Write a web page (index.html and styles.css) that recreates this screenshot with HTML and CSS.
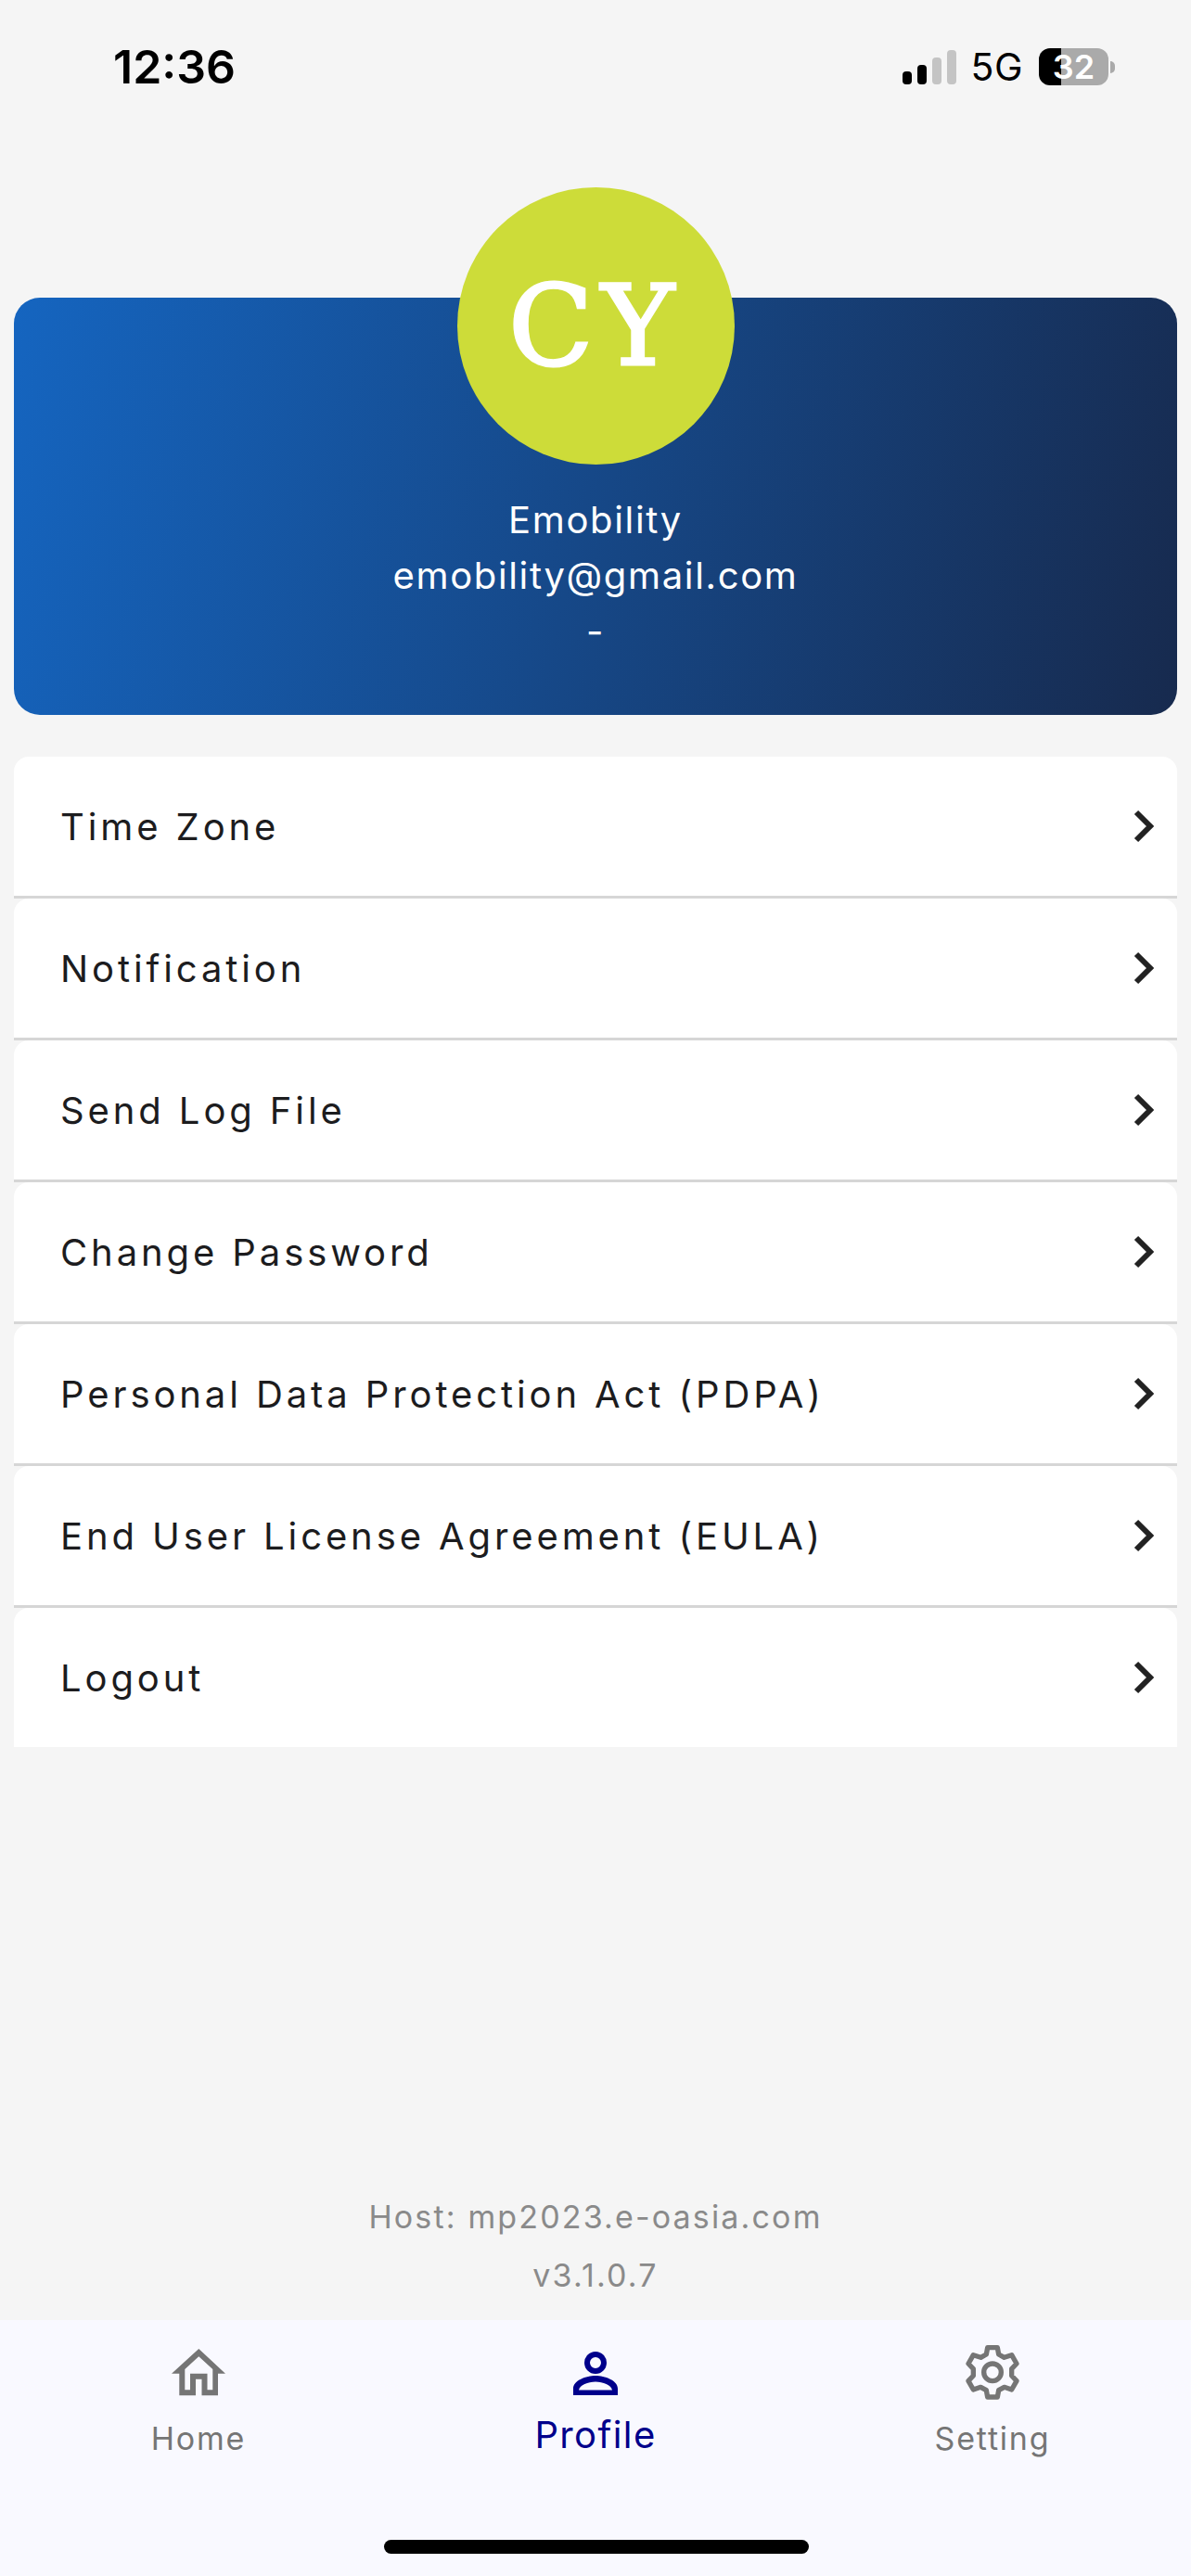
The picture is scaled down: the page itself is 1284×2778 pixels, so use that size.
FILE: index.html
```html
<!DOCTYPE html>
<html>
<head>
    <title>Profile</title>
    <link rel="stylesheet" href="styles.css">
</head>
<body>
    <div class="screen">
        <div class="status-bar">
            <div class="clock">12:36</div>
            <div class="status-right">
                <div class="signal">
                    <span class="bar bar-1"></span>
                    <span class="bar bar-2"></span>
                    <span class="bar bar-3"></span>
                    <span class="bar bar-4"></span>
                </div>
                <div class="network">5G</div>
                <div class="battery">
                    <div class="battery-body">32</div>
                    <div class="battery-tip"></div>
                </div>
            </div>
        </div>

        <div class="profile-card">
            <div class="avatar">CY</div>
            <div class="profile-name">Emobility</div>
            <div class="profile-line">emobility@gmail.com</div>
            <div class="profile-line">-</div>
        </div>

        <div class="menu">
            <div class="menu-row"><span>Time Zone</span><svg class="chevron" viewBox="0 0 22 36"><path d="M3 3l15 15L3 33"/></svg></div>
            <div class="menu-row"><span>Notification</span><svg class="chevron" viewBox="0 0 22 36"><path d="M3 3l15 15L3 33"/></svg></div>
            <div class="menu-row"><span>Send Log File</span><svg class="chevron" viewBox="0 0 22 36"><path d="M3 3l15 15L3 33"/></svg></div>
            <div class="menu-row"><span>Change Password</span><svg class="chevron" viewBox="0 0 22 36"><path d="M3 3l15 15L3 33"/></svg></div>
            <div class="menu-row"><span>Personal Data Protection Act (PDPA)</span><svg class="chevron" viewBox="0 0 22 36"><path d="M3 3l15 15L3 33"/></svg></div>
            <div class="menu-row"><span>End User License Agreement (EULA)</span><svg class="chevron" viewBox="0 0 22 36"><path d="M3 3l15 15L3 33"/></svg></div>
            <div class="menu-row"><span>Logout</span><svg class="chevron" viewBox="0 0 22 36"><path d="M3 3l15 15L3 33"/></svg></div>
        </div>

        <div class="app-info">
            <div>Host: mp2023.e-oasia.com</div>
            <div>v3.1.0.7</div>
        </div>

        <div class="tab-bar">
            <div class="tab">
                <div class="tab-icon">
                    <svg class="icon-home" viewBox="0 0 58 51"><path fill-rule="evenodd" d="M29.3 0L58 26.7H50V50.3H32.5V32.7H26V50.3H8.3V26.7H0ZM29.3 8.3L14.3 22V44.3H20V26.7H38.5V44.3H44.3V22Z"/></svg>
                </div>
                <div class="tab-label">Home</div>
            </div>
            <div class="tab tab-active">
                <div class="tab-icon">
                    <svg class="icon-profile" viewBox="0 0 48 47"><circle cx="24" cy="12" r="9"/><path d="M0 47V40C0 31 14 26 24 26C34 26 48 31 48 40V47ZM6 41.5H42C41 36 32 32.5 24 32.5C16 32.5 7 36 6 41.5Z"/></svg>
                </div>
                <div class="tab-label">Profile</div>
            </div>
            <div class="tab">
                <div class="tab-icon">
                    <svg class="icon-gear" viewBox="153 88 174 177"><path d="M224 96H256L260 118L278 128L302 120L318 148L302 165V187L318 204L302 232L278 224L260 234L256 256H224L220 234L202 224L178 232L162 204L178 187V165L162 148L178 120L202 128L220 118Z"/><circle cx="240" cy="176" r="28"/></svg>
                </div>
                <div class="tab-label">Setting</div>
            </div>
            <div class="home-indicator"></div>
        </div>
    </div>
</body>
</html>
```

FILE: styles.css
```css
* {
    box-sizing: border-box;
}
body {
    margin: 0;
    background-color: #f5f5f5;
    font-family: Inter, "Noto Sans", sans-serif;
}
.screen {
    display: flex;
    flex-direction: column;
    width: 1284px;
    height: 2778px;
}

/* status bar */
.status-bar {
    display: flex;
    justify-content: space-between;
    align-items: center;
    height: 144px;
    padding: 0 82px 0 122px;
    flex-shrink: 0;
}
.clock {
    font-size: 50px;
    font-weight: 600;
    color: #000;
}
.status-right {
    display: flex;
    align-items: center;
}
.signal {
    display: flex;
    align-items: flex-end;
    gap: 6px;
    height: 37px;
    margin-right: 15px;
}
.bar {
    width: 10px;
    border-radius: 4px;
    background-color: #c4c4c4;
}
.bar-1 { height: 14px; background-color: #000; }
.bar-2 { height: 21px; background-color: #000; }
.bar-3 { height: 29px; }
.bar-4 { height: 37px; }
.network {
    font-size: 41px;
    letter-spacing: 0.5px;
    color: #000;
    margin-right: 17px;
}
.battery {
    display: flex;
    align-items: center;
}
.battery-body {
    width: 75px;
    height: 40px;
    border-radius: 12px;
    background: linear-gradient(90deg, #000 32%, #aaa 32%);
    color: #fff;
    font-size: 36px;
    font-weight: 600;
    line-height: 40px;
    text-align: center;
}
.battery-tip {
    width: 5px;
    height: 13px;
    margin-left: 2px;
    border-radius: 0 7px 7px 0;
    background-color: #aaa;
}

/* profile card */
.profile-card {
    display: flex;
    flex-direction: column;
    align-items: center;
    height: 450px;
    margin: 177px 15px 0;
    border-radius: 28px;
    background: linear-gradient(103deg, #1565c0 0%, #172a4e 100%);
    color: #fff;
    flex-shrink: 0;
}
.avatar {
    display: flex;
    justify-content: center;
    align-items: center;
    width: 299px;
    height: 299px;
    margin-top: -119px;
    margin-bottom: 30px;
    border-radius: 50%;
    background-color: #cddc39;
    font-family: "DejaVu Serif", serif;
    font-size: 119px;
    letter-spacing: 9px;
    -webkit-text-stroke: 3px #fff;
}
.profile-name, .profile-line {
    font-size: 40px;
    font-weight: 380;
    line-height: 60px;
    letter-spacing: 1.65px;
}

/* menu */
.menu {
    margin: 45px 15px 0;
    flex-shrink: 0;
}
.menu-row {
    display: flex;
    justify-content: space-between;
    align-items: center;
    height: 153px;
    padding: 0 25px 0 50px;
    border-bottom: 3px solid #d6d6d6;
    border-radius: 16px 16px 0 0;
    background-color: #fff;
    color: #1c1c1e;
    font-size: 40px;
    font-weight: 380;
    letter-spacing: 3.9px;
}
.menu-row:last-child {
    height: 150px;
    border-bottom: none;
}
.chevron {
    width: 22px;
    height: 36px;
    fill: none;
    stroke: #222;
    stroke-width: 6;
}

/* host and version */
.app-info {
    margin-top: auto;
    padding-bottom: 17px;
    color: #8a8a8a;
    font-size: 34px;
    font-weight: 380;
    line-height: 63px;
    letter-spacing: 2.15px;
    text-align: center;
}

/* bottom tabs */
.tab-bar {
    position: relative;
    display: flex;
    height: 276px;
    background-color: #f9f9ff;
    flex-shrink: 0;
}
.tab {
    display: flex;
    flex-direction: column;
    align-items: center;
    width: 428px;
    color: #757575;
    font-size: 34px;
    font-weight: 380;
    letter-spacing: 1.8px;
}
.tab-icon {
    display: flex;
    justify-content: center;
    align-items: center;
    height: 60px;
    margin-top: 26px;
}
.tab-label {
    margin-top: 21px;
}
.tab-active {
    color: #00008b;
    font-size: 40px;
    letter-spacing: 1.4px;
}
.tab-active .tab-label {
    margin-top: 13px;
}
.icon-home {
    width: 58px;
    height: 51px;
    fill: #757575;
}
.icon-profile {
    width: 48px;
    height: 47px;
    margin-top: 3px;
    fill: #00008b;
    fill-rule: evenodd;
}
.icon-profile circle {
    fill: none;
    stroke: #00008b;
    stroke-width: 6;
}
.icon-gear {
    width: 58px;
    height: 59px;
    fill: none;
    stroke: #757575;
    stroke-width: 16;
    stroke-linejoin: round;
}
.home-indicator {
    position: absolute;
    left: 414px;
    bottom: 24px;
    width: 458px;
    height: 15px;
    border-radius: 8px;
    background-color: #000;
}
```
